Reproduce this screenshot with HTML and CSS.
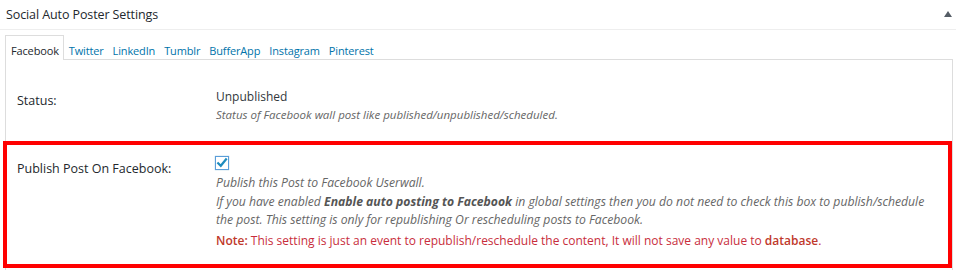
FILE: index.html
```html
<!DOCTYPE html>
<html>
<head>
<meta charset="utf-8">
<link rel="stylesheet" href="styles.css">
</head>
<body>
<div class="postbox">
  <div class="postbox-header">
    <h2 class="postbox-title">Social Auto Poster Settings</h2>
    <span class="toggle-arrow"></span>
  </div>
  <div class="postbox-inside">
    <ul class="tabs">
      <li class="tab active">Facebook</li>
      <li class="tab">Twitter</li>
      <li class="tab">LinkedIn</li>
      <li class="tab">Tumblr</li>
      <li class="tab">BufferApp</li>
      <li class="tab">Instagram</li>
      <li class="tab">Pinterest</li>
    </ul>
    <div class="tab-panel">
      <div class="row row-status">
        <div class="row-label">Status:</div>
        <div class="row-value">
          <div class="value-text">Unpublished</div>
          <p class="description">Status of Facebook wall post like published/unpublished/scheduled.</p>
        </div>
      </div>
      <div class="row row-publish highlight">
        <div class="row-label">Publish Post On Facebook:</div>
        <div class="row-value">
          <span class="checkbox">
            <svg width="14" height="14" viewBox="0 0 14 14"><path d="M3.2 7.2 L5.8 9.8 L11 3.4" fill="none" stroke="#1e8cbe" stroke-width="2.2" stroke-linecap="square"/></svg>
          </span>
          <p class="description">Publish this Post to Facebook Userwall.<br>If you have enabled <strong>Enable auto posting to Facebook</strong> in global settings then you do not need to check this box to publish/schedule<br>the post. This setting is only for republishing Or rescheduling posts to Facebook.</p>
          <p class="note"><strong>Note:</strong> This setting is just an event to republish/reschedule the content, It will not save any value to <strong>database</strong>.</p>
        </div>
      </div>
    </div>
  </div>
</div>
</body>
</html>
```

FILE: styles.css
```css
html, body {
  margin: 0;
  padding: 0;
  background: #ffffff;
}

body {
  font-family: "Open Sans", "Noto Sans", sans-serif;
  color: #23282d;
  width: 956px;
  height: 270px;
  overflow: hidden;
}

.postbox-header {
  display: flex;
  align-items: center;
  justify-content: space-between;
  height: 29px;
  border-bottom: 1px solid #eeeeee;
  padding: 0 4px 0 6px;
}

.postbox-title {
  margin: 0;
  font-size: 12.5px;
  font-weight: 400;
  line-height: 29px;
  color: #23282d;
  letter-spacing: -0.1px;
}

.toggle-arrow {
  width: 0;
  height: 0;
  border-left: 4px solid transparent;
  border-right: 4px solid transparent;
  border-bottom: 6px solid #555d66;
  margin-top: -2px;
}

.tabs {
  list-style: none;
  margin: 5px 0 -1px 5px;
  padding: 0;
  display: flex;
  height: 25px;
  position: relative;
  z-index: 1;
}

.tab {
  font-size: 11px;
  line-height: 21px;
  padding: 4px 3px 0 4px;
  color: #0073aa;
  border: 1px solid transparent;
  border-bottom: none;
  letter-spacing: -0.15px;
}

.tab.active {
  padding: 4px 4px 0 5px;
  color: #23282d;
  background: #ffffff;
  border-color: #dddddd;
}

.tab-panel {
  margin: 0 3px 0 5px;
  border: 1px solid #dddddd;
  min-height: 220px;
}

.row {
  display: grid;
  grid-template-columns: 210px 1fr;
}

.row-label {
  font-size: 12.5px;
  font-weight: 400;
  line-height: 19px;
  color: #23282d;
  padding-left: 11px;
}

.row-value {
  padding-right: 10px;
}

.row-status {
  height: 81px;
}

.row-status .row-label {
  padding-top: 31px;
}

.row-status .row-value {
  padding-top: 27px;
}

.value-text {
  font-size: 12px;
  line-height: 19px;
  color: #32373c;
}

.description {
  margin: 0;
  font-size: 11.5px;
  font-style: italic;
  line-height: 18.5px;
  color: #666666;
}

.description strong {
  font-weight: 700;
  color: #555555;
}

.highlight {
  border: 4px solid #ff0000;
  margin-left: -3px;
  height: 119px;
  grid-template-columns: 208px 1fr;
}

.highlight .row-label {
  padding-left: 10px;
  padding-top: 14px;
}

.highlight .row-value {
  padding-top: 11px;
  padding-left: 0;
}

.checkbox {
  display: block;
  width: 12px;
  height: 12px;
  border: 1px solid #5b9dd9;
  box-shadow: 0 0 1px rgba(30, 140, 190, 0.6);
}

.checkbox svg {
  display: block;
  margin: -1px 0 0 -1px;
}

.highlight .description,
.highlight .note {
  padding-left: 1px;
}

.highlight .description {
  margin-top: 4px;
  font-size: 12.2px;
}

.note {
  margin: 2px 0 0;
  font-size: 12px;
  line-height: 18.5px;
  color: #c82d3c;
}

.note strong {
  font-weight: 600;
  color: #c0392b;
}
```
